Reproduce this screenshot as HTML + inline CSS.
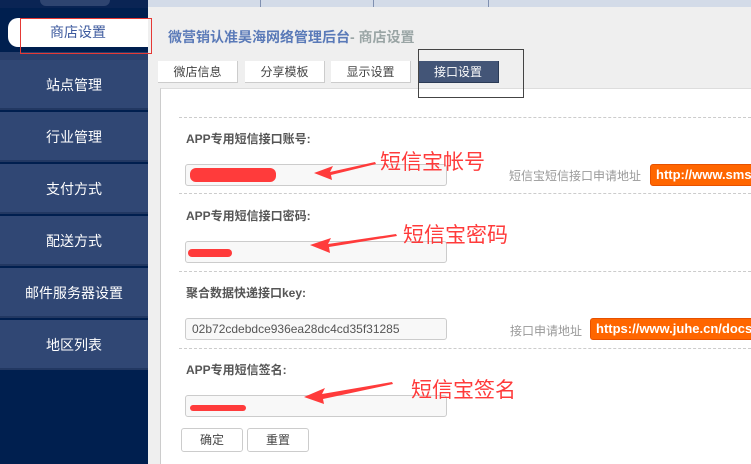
<!DOCTYPE html>
<html><head><meta charset="utf-8"><style>
*{margin:0;padding:0;box-sizing:border-box}
body{width:751px;height:464px;overflow:hidden;background:#efefef;font-family:"Liberation Sans","Noto Sans CJK SC",sans-serif;position:relative}
.a{position:absolute}
.side{left:0;top:0;width:148px;height:464px;background:#001f4f}
.item{left:0;width:148px;height:50px;background:#304774;color:#fff;font-size:14px;text-align:center;line-height:50px;border-bottom:2px solid #223862}
.lbl{font-size:12px;font-weight:bold;color:#555}
.inp{background:#f8f8f8;border:1px solid #ccc;border-radius:3px;height:22px;width:262px;left:185px;font-size:12px;color:#555;padding-left:6px;line-height:20px}
.sep{left:179px;right:0;border-top:1px dashed #ccc;height:0}
.hint{font-size:12px;color:#999}
.or{background:#ff6600;border:1px solid #e65100;border-radius:3px;color:#fff;font-size:13px;font-weight:bold;height:22px;line-height:20px;padding-left:5px;white-space:nowrap;overflow:hidden;right:-4px}
.red{background:#ff3b3b;border-radius:6px}
.ann{color:#ff3b3b;font-size:21px;font-weight:normal}
.tab{top:61px;height:22px;background:#fff;font-size:12px;color:#444;text-align:center;line-height:22px;border-right:1px solid #ccc;border-bottom:1px solid #ccc}
.btn{top:428px;height:24px;width:62px;border:1px solid #ccc;border-radius:3px;background:#fff;font-size:12px;color:#444;text-align:center;line-height:22px}
</style></head><body>
<div class="a side"></div>
<div class="a" style="left:0;top:0;width:148px;height:8px;background:#0a2454"></div>
<div class="a" style="left:40px;top:0;width:70px;height:6px;background:#2e4470;border-radius:0 0 8px 8px"></div>
<div class="a" style="left:8px;top:18px;width:140px;height:29px;background:#fff;border-radius:10px 0 0 10px;color:#3d5a9e;font-size:14px;text-align:center;line-height:29px">商店设置</div>
<div class="a" style="left:0;top:52px;width:148px;height:8px;background:#2a3f6b"></div>
<div class="a item" style="top:60px">站点管理</div>
<div class="a item" style="top:112px">行业管理</div>
<div class="a item" style="top:164px">支付方式</div>
<div class="a item" style="top:216px">配送方式</div>
<div class="a item" style="top:268px">邮件服务器设置</div>
<div class="a item" style="top:320px">地区列表</div>
<div class="a" style="left:148px;top:0;right:0;height:7px;background:#d3dbe8"></div>
<div class="a" style="left:260px;top:0;width:1px;height:7px;background:#8090b0"></div>
<div class="a" style="left:373px;top:0;width:1px;height:7px;background:#8090b0"></div>
<div class="a" style="left:488px;top:0;width:1px;height:7px;background:#8090b0"></div>
<div class="a" style="left:168px;top:27px;font-size:14px;font-weight:bold;color:#5a7ab8">微营销认准昊海网络管理后台<span style="color:#9aa5a5">- 商店设置</span></div>
<div class="a tab" style="left:158px;width:80px">微店信息</div>
<div class="a tab" style="left:245px;width:80px">分享模板</div>
<div class="a tab" style="left:331px;width:80px">显示设置</div>
<div class="a tab" style="left:418px;width:81px;background:#435577;color:#fff;border-color:#2a3a55">接口设置</div>
<div class="a" style="left:160px;top:88px;right:0;bottom:0;background:#fff;border-left:1px solid #ccc;border-top:1px solid #ddd"></div>
<div class="a sep" style="top:117px"></div>
<div class="a lbl" style="left:186px;top:130px">APP专用短信接口账号:</div>
<div class="a inp" style="top:164px"></div>
<div class="a red" style="left:190px;top:168px;width:86px;height:14px"></div>
<div class="a hint" style="left:509px;top:167px">短信宝短信接口申请地址</div>
<div class="a or" style="left:650px;top:164px">http://www.smsbao.com</div>
<div class="a sep" style="top:193px"></div>
<div class="a lbl" style="left:186px;top:207px">APP专用短信接口密码:</div>
<div class="a inp" style="top:241px"></div>
<div class="a red" style="left:188px;top:249px;width:44px;height:8px"></div>
<div class="a sep" style="top:271px"></div>
<div class="a lbl" style="left:186px;top:284px">聚合数据快递接口key:</div>
<div class="a inp" style="top:318px">02b72cdebdce936ea28dc4cd35f31285</div>
<div class="a hint" style="left:510px;top:322px">接口申请地址</div>
<div class="a or" style="left:590px;top:318px">https://www.juhe.cn/docs/api</div>
<div class="a sep" style="top:348px"></div>
<div class="a lbl" style="left:186px;top:361px">APP专用短信签名:</div>
<div class="a inp" style="top:395px"></div>
<div class="a red" style="left:190px;top:405px;width:56px;height:6px"></div>
<div class="a btn" style="left:181px">确定</div>
<div class="a btn" style="left:247px">重置</div>
<div class="a ann" style="left:380px;top:146px">短信宝帐号</div>
<div class="a ann" style="left:403px;top:219px">短信宝密码</div>
<div class="a ann" style="left:411px;top:374px">短信宝签名</div>
<svg class="a" style="left:0;top:0" width="751" height="464">
<g fill="#ff3b3b">
<polygon points="375,162 330,172 333,166 314,173 332,180 331,175 376,164"/>
<polygon points="396,234 328,244 331,238 310,245 330,253 329,247 397,236"/>
<polygon points="392,382 322,394 325,388 304,397 324,404 323,399 393,384"/>
</g>
<rect x="20.5" y="18.5" width="131" height="35" fill="none" stroke="#e53935" stroke-width="1"/>
<rect x="418.5" y="49.5" width="105" height="48" fill="none" stroke="#444" stroke-width="1"/>
</svg>
</body></html>
